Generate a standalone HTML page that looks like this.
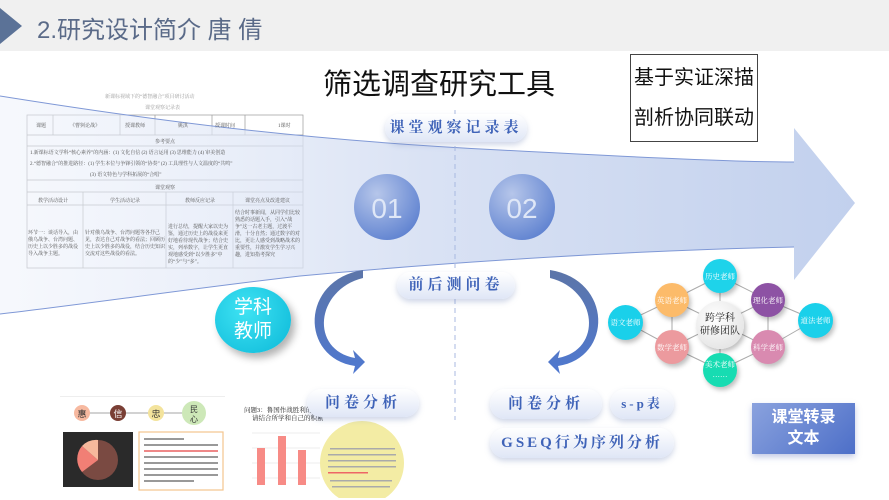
<!DOCTYPE html>
<html><head><meta charset="utf-8">
<style>
*{margin:0;padding:0;box-sizing:border-box}
body{width:889px;height:500px;overflow:hidden;background:#fff;position:relative;font-family:"Liberation Sans","Noto Sans CJK SC",sans-serif}
.abs{position:absolute}
.pill{position:absolute;z-index:5;border-radius:16px;background:linear-gradient(#ffffff,#dfe6f6);box-shadow:0 3px 6px rgba(120,140,190,.35);color:#3f63b8;font-weight:bold;text-align:center;letter-spacing:4px;font-family:"Liberation Serif","Noto Serif CJK SC",serif}
.node{position:absolute;z-index:3;border-radius:50%;color:#fff;font-size:7.5px;white-space:nowrap;display:flex;align-items:center;justify-content:center;text-align:center;box-shadow:2px 3px 5px rgba(0,0,0,.25);font-family:"Liberation Serif","Noto Serif CJK SC",serif}
.tb{font-size:5px;color:#555;font-family:"Liberation Serif","Noto Serif CJK SC",serif}
</style></head><body>
<!-- header -->
<div class="abs" style="left:0;top:0;width:889px;height:51px;background:#f0f0f0"></div>
<svg class="abs" style="left:0;top:0" width="30" height="50"><polygon points="0,8 22,26 0,44" fill="#5b7297"/></svg>
<div class="abs" style="left:37px;top:10px;font-size:24px;color:#5a6a88">2.研究设计简介 唐 倩</div>

<!-- table -->
<div class="abs tb" style="left:105px;top:93px;color:#999">新课标视域下的“德智融合”项目研讨活动</div>
<div class="abs tb" style="left:145px;top:104px;color:#999">课堂观察记录表</div>
<svg class="abs" style="left:0;top:0" width="889" height="500">
<g stroke="#999" stroke-width="0.7" fill="none">
<rect x="27" y="115" width="276" height="153"/>
<line x1="27" y1="135" x2="303" y2="135"/><line x1="27" y1="146" x2="303" y2="146"/>
<line x1="27" y1="180" x2="303" y2="180"/><line x1="27" y1="192" x2="303" y2="192"/><line x1="27" y1="205" x2="303" y2="205"/>
<line x1="53" y1="115" x2="53" y2="135"/><line x1="120" y1="115" x2="120" y2="135"/><line x1="155" y1="115" x2="155" y2="135"/><line x1="212" y1="115" x2="212" y2="135"/><line x1="245" y1="115" x2="245" y2="135"/>
<line x1="83" y1="192" x2="83" y2="268"/><line x1="166" y1="192" x2="166" y2="268"/><line x1="233" y1="192" x2="233" y2="268"/>
</g>
<defs>
<linearGradient id="band" x1="0" x2="1" y1="0" y2="0"><stop offset="0" stop-color="#eef2fb" stop-opacity=".6"/><stop offset=".5" stop-color="#d3ddf2"/><stop offset="1" stop-color="#b7c8ea"/></linearGradient>
<radialGradient id="c1" cx=".35" cy=".3" r=".8"><stop offset="0" stop-color="#b6c6ea"/><stop offset="1" stop-color="#5b7fcf"/></radialGradient>
<linearGradient id="ar" x1="0" x2="0" y1="0" y2="1"><stop offset="0" stop-color="#5c75a8"/><stop offset="1" stop-color="#4f78d0"/></linearGradient>
</defs>
<path d="M0,96 C150,120 300,140 500,150 C650,158 740,162 794,162 L794,128 L855,203 L794,280 L794,247 C640,250 450,262 300,276 C180,290 80,305 0,314 Z" fill="url(#band)" opacity=".85"/>
<path d="M0,96 C150,120 300,140 500,150 C650,158 740,162 794,162" stroke="#7f98d6" stroke-width="1" fill="none"/>
<path d="M0,314 C80,305 180,290 300,276 C450,262 640,250 794,247" stroke="#7f98d6" stroke-width="1" fill="none"/>
<line x1="455" y1="110" x2="455" y2="420" stroke="#a9b9e0" stroke-width="1" stroke-dasharray="5,4"/>
<circle cx="387" cy="207" r="33" fill="url(#c1)"/>
<circle cx="522" cy="207" r="33" fill="url(#c1)"/>
<text x="387" y="218" font-size="28" fill="#dfe7f7" text-anchor="middle" font-family="Liberation Sans">01</text>
<text x="522" y="218" font-size="28" fill="#dfe7f7" text-anchor="middle" font-family="Liberation Sans">02</text>
<!-- curved arrows -->
<path d="M363,278 C315,290 310,350 355,358 L353,350 L365,362 L353,374 L355,366 C300,358 300,280 363,270 Z" fill="url(#ar)"/>
<path d="M550,278 C598,290 603,350 558,358 L560,350 L548,362 L560,374 L558,366 C613,358 613,280 550,270 Z" fill="url(#ar)"/>
<!-- network lines -->
<g stroke="#aaa" stroke-width="1">
<line x1="720" y1="276" x2="672" y2="300"/><line x1="720" y1="276" x2="768" y2="300"/><line x1="720" y1="276" x2="720" y2="370"/>
<line x1="672" y1="300" x2="626" y2="322"/><line x1="626" y1="322" x2="672" y2="347"/><line x1="672" y1="300" x2="672" y2="347"/>
<line x1="768" y1="300" x2="815" y2="320"/><line x1="815" y1="320" x2="768" y2="347"/><line x1="768" y1="300" x2="768" y2="347"/>
<line x1="672" y1="347" x2="720" y2="370"/><line x1="768" y1="347" x2="720" y2="370"/>
<line x1="672" y1="300" x2="768" y2="347"/><line x1="768" y1="300" x2="672" y2="347"/>
</g>
</svg>
<div class="abs tb" style="left:36px;top:122px">课题</div><div class="abs tb" style="left:70px;top:122px">《曹刿论战》</div>
<div class="abs tb" style="left:125px;top:122px">授课教师</div><div class="abs tb" style="left:178px;top:122px">姚淇</div>
<div class="abs tb" style="left:215px;top:122px">授课时间</div><div class="abs tb" style="left:278px;top:122px">1课时</div>
<div class="abs tb" style="left:155px;top:138px">参考要点</div>
<div class="abs tb" style="left:30px;top:149px">1.新课标语文学科“核心素养”的内涵：(1) 文化自信 (2) 语言运用 (3) 思维能力 (4) 审美创造</div>
<div class="abs tb" style="left:30px;top:160px">2.“德智融合”的推进路径：(1) 学生本位与争锋引领的“协奏” (2) 工具理性与人文温度的“共鸣”</div>
<div class="abs tb" style="left:90px;top:171px">(3) 语文特色与学科拓展的“合唱”</div>
<div class="abs tb" style="left:155px;top:184px">课堂观察</div>
<div class="abs tb" style="left:38px;top:197px">教学活动设计</div><div class="abs tb" style="left:110px;top:197px">学生活动记录</div>
<div class="abs tb" style="left:185px;top:197px">教师反应记录</div><div class="abs tb" style="left:245px;top:197px">课堂亮点及改进建议</div>
<div class="abs tb" style="left:28px;top:230px;width:54px;line-height:7px">环节一：谈话导入，由俄乌战争、台湾问题、历史上以少胜多的战役导入战争主题。</div>
<div class="abs tb" style="left:85px;top:230px;width:80px;line-height:7px">针对俄乌战争、台湾问题等各抒己见，表达自己对战争的看法；回顾历史上以少胜多的战役，结合历史知识交流对这些战役的看法。</div>
<div class="abs tb" style="left:168px;top:224px;width:64px;line-height:7px">进行总结，提醒大家以史为鉴，通过历史上的战役来更好地看待现代战争；结合史实，列举数字，让学生更直观地感受到“以少胜多”中的“少”与“多”。</div>
<div class="abs tb" style="left:235px;top:210px;width:67px;line-height:7px">结合时事新闻，从同学们比较熟悉的话题入手，引入“战争”这一古老主题，过渡平滑，十分自然；通过数字的对比，更让人感受到战略战术的重要性，并激发学生学习兴趣，进知指考探究</div>

<!-- title & box -->
<div class="abs" style="left:323px;top:61px;font-size:29px;color:#111">筛选调查研究工具</div>
<div class="abs" style="left:630px;top:54px;width:128px;height:88px;border:1.5px solid #444;background:#fff;font-size:20px;line-height:40px;text-align:center;padding-top:3px;color:#111">基于实证深描<br>剖析协同联动</div>

<!-- bottom-left image -->
<div class="abs" style="left:60px;top:396px;width:165px;height:96px;background:#fff;border-top:1px solid #eee"></div>
<svg class="abs" style="left:60px;top:396px" width="170" height="100">
<line x1="22" y1="17" x2="140" y2="17" stroke="#888" stroke-width=".8"/>
<circle cx="22" cy="17" r="8" fill="#f7b9a0"/><circle cx="58" cy="17" r="8" fill="#7a3f35"/><circle cx="96" cy="17" r="8" fill="#f3e39c"/><circle cx="134" cy="17" r="12" fill="#cde8b8"/>
<text x="22" y="21" font-size="9" text-anchor="middle" fill="#333">惠</text><text x="58" y="21" font-size="9" text-anchor="middle" fill="#fff">信</text><text x="96" y="21" font-size="9" text-anchor="middle" fill="#333">忠</text><text x="134" y="16" font-size="8" text-anchor="middle" fill="#333">民</text><text x="134" y="26" font-size="8" text-anchor="middle" fill="#333">心</text>
<rect x="3" y="36" width="70" height="55" fill="#2a2a2a"/>
<circle cx="38" cy="64" r="20" fill="#7a4a42"/><path d="M38,64 L22,76 A20,20 0 0,1 22,50 Z" fill="#f17f75"/><path d="M38,64 L22,50 A20,20 0 0,1 38,44 Z" fill="#f6b89c"/>
<rect x="79" y="36" width="84" height="58" fill="#fff" stroke="#f3c48e" stroke-width="1.2"/>
<g fill="#999"><rect x="84" y="42" width="40" height="2"/><rect x="84" y="48" width="74" height="2"/><rect x="84" y="54" width="74" height="2" fill="#e88"/><rect x="84" y="60" width="74" height="2"/><rect x="84" y="66" width="74" height="2"/><rect x="84" y="72" width="74" height="2"/><rect x="84" y="78" width="74" height="2"/><rect x="84" y="84" width="50" height="2"/></g>
</svg>
<!-- bottom middle image -->
<svg class="abs" style="left:240px;top:398px" width="170" height="100">
<rect x="0" y="0" width="160" height="100" fill="#fff"/>
<text x="4" y="14" font-size="6.5" fill="#222" font-family="Liberation Serif,Noto Serif CJK SC,serif">问题3：鲁国作战胜利的原因</text>
<text x="12" y="22" font-size="6.5" fill="#222" font-family="Liberation Serif,Noto Serif CJK SC,serif">请结合所学和自己的积累</text>
<g stroke="#eee"><line x1="12" y1="35" x2="80" y2="35"/><line x1="12" y1="50" x2="80" y2="50"/><line x1="12" y1="65" x2="80" y2="65"/><line x1="12" y1="80" x2="80" y2="80"/></g>
<rect x="17" y="50" width="8" height="37" fill="#f78b86"/><rect x="38" y="38" width="8" height="49" fill="#f78b86"/><rect x="58" y="52" width="8" height="35" fill="#f78b86"/>
<ellipse cx="122" cy="65" rx="42" ry="42" fill="#f3eca4"/>
<g fill="#aaa"><rect x="90" y="50" width="65" height="1.5"/><rect x="88" y="56" width="68" height="1.5"/><rect x="88" y="62" width="68" height="1.5"/><rect x="88" y="68" width="68" height="1.5"/><rect x="88" y="74" width="40" height="1.5" fill="#e66"/><rect x="90" y="82" width="62" height="1.5"/><rect x="92" y="88" width="58" height="1.5"/></g>
</svg>

<!-- pills -->
<div class="pill" style="left:385px;top:114px;width:142px;height:28px;line-height:28px;font-size:15px">课堂观察记录表</div>
<div class="pill" style="left:397px;top:272px;width:118px;height:27px;line-height:27px;font-size:15px">前后测问卷</div>
<div class="pill" style="left:307px;top:389px;width:112px;height:28px;line-height:28px;font-size:15px">问卷分析</div>
<div class="pill" style="left:490px;top:389px;width:112px;height:30px;line-height:30px;font-size:15px">问卷分析</div>
<div class="pill" style="left:610px;top:389px;width:64px;height:30px;line-height:30px;font-size:13px;letter-spacing:3px">s-p表</div>
<div class="pill" style="left:490px;top:428px;width:184px;height:30px;line-height:30px;font-size:15px;letter-spacing:3px">GSEQ行为序列分析</div>

<!-- subject teacher -->
<div class="abs" style="left:215px;top:287px;width:76px;height:66px;border-radius:50%;background:radial-gradient(circle at 40% 35%,#3fe3f3,#0bb8d8);box-shadow:4px 5px 8px rgba(0,0,0,.3);color:#fff;font-size:19px;line-height:24px;text-align:center;padding-top:9px">学科<br>教师</div>

<!-- network -->
<div class="node" style="left:696px;top:301px;width:48px;height:48px;background:radial-gradient(circle at 40% 35%,#fff,#ddd);color:#222;font-size:10px;line-height:13px">跨学科<br>研修团队</div>
<div class="node" style="left:703px;top:259px;width:34px;height:34px;background:#1ed3ea">历史老师</div>
<div class="node" style="left:655px;top:283px;width:34px;height:34px;background:#fcbb6a">英语老师</div>
<div class="node" style="left:751px;top:283px;width:34px;height:34px;background:#8d52a4">理化老师</div>
<div class="node" style="left:608px;top:305px;width:35px;height:35px;background:#1ad0ea">语文老师</div>
<div class="node" style="left:798px;top:303px;width:35px;height:35px;background:#1ad0ea">道法老师</div>
<div class="node" style="left:655px;top:330px;width:34px;height:34px;background:#ec9a9e">数学老师</div>
<div class="node" style="left:751px;top:330px;width:34px;height:34px;background:#d98ab0">科学老师</div>
<div class="node" style="left:703px;top:353px;width:34px;height:34px;background:#17dcb2;line-height:10px">美术老师<br>……</div>

<div class="abs" style="left:752px;top:403px;width:103px;height:51px;background:linear-gradient(135deg,#8aa2de,#4d6fc8);box-shadow:0 3px 6px rgba(80,100,180,.35);color:#fff;font-size:16px;line-height:21px;text-align:center;padding-top:4px;font-weight:bold">课堂转录<br>文本</div>
</body></html>
